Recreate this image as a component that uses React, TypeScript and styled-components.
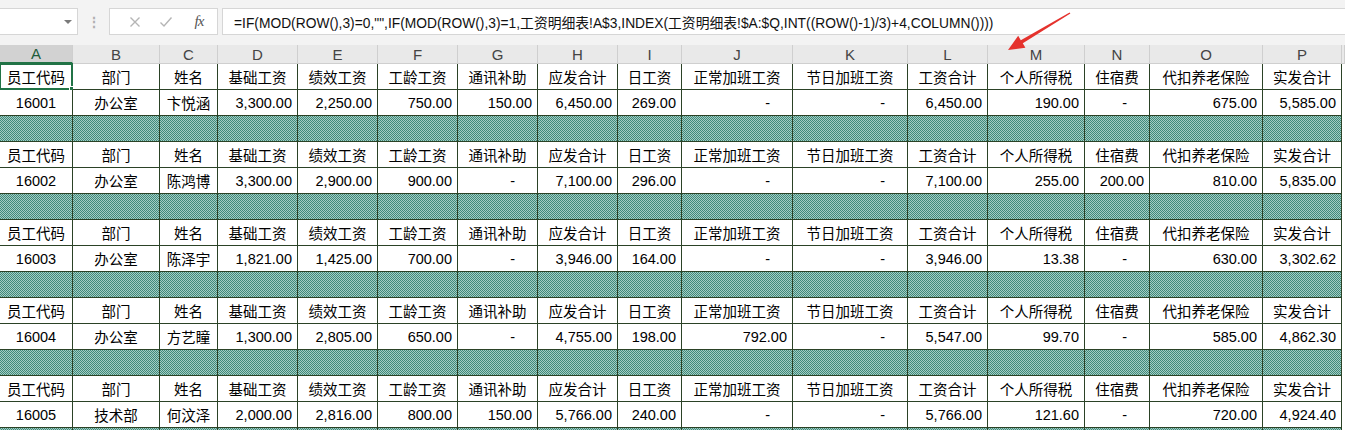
import React from "react";
import styled, { createGlobalStyle } from "styled-components";

const Global = createGlobalStyle`
  html, body { margin: 0; padding: 0; background: #fff; overflow: hidden; }
  body { width: 1345px; height: 430px; font-family: "Liberation Sans", "Noto Sans CJK SC", sans-serif; }
`;

const COLS = [73, 87, 58, 80, 80, 80, 80, 80, 64, 111, 115, 80, 97, 65, 113, 79];
const LEFTS = COLS.map((_, i) => COLS.slice(0, i).reduce((a, b) => a + b, 0));
const LETTERS = "ABCDEFGHIJKLMNOP".split("");
const TEMPLATE = COLS.map((w) => `${w}px`).join(" ") + " 1fr";
const SHEET_TOP = 64;
const ROW_H = 26;

const HEADERS = [
  "员工代码", "部门", "姓名", "基础工资", "绩效工资", "工龄工资", "通讯补助", "应发合计",
  "日工资", "正常加班工资", "节日加班工资", "工资合计", "个人所得税", "住宿费", "代扣养老保险", "实发合计",
];

const DATA: string[][] = [
  ["16001", "办公室", "卞悦涵", "3,300.00", "2,250.00", "750.00", "150.00", "6,450.00", "269.00", "-", "-", "6,450.00", "190.00", "-", "675.00", "5,585.00"],
  ["16002", "办公室", "陈鸿博", "3,300.00", "2,900.00", "900.00", "-", "7,100.00", "296.00", "-", "-", "7,100.00", "255.00", "200.00", "810.00", "5,835.00"],
  ["16003", "办公室", "陈泽宇", "1,821.00", "1,425.00", "700.00", "-", "3,946.00", "164.00", "-", "-", "3,946.00", "13.38", "-", "630.00", "3,302.62"],
  ["16004", "办公室", "方艺瞳", "1,300.00", "2,805.00", "650.00", "-", "4,755.00", "198.00", "792.00", "-", "5,547.00", "99.70", "-", "585.00", "4,862.30"],
  ["16005", "技术部", "何汶泽", "2,000.00", "2,816.00", "800.00", "150.00", "5,766.00", "240.00", "-", "-", "5,766.00", "121.60", "-", "720.00", "4,924.40"],
];

const FORMULA =
  '=IF(MOD(ROW(),3)=0,"",IF(MOD(ROW(),3)=1,工资明细表!A$3,INDEX(工资明细表!$A:$Q,INT((ROW()-1)/3)+4,COLUMN())))';

const Page = styled.div`
  position: relative;
  width: 1345px;
  height: 430px;
  overflow: hidden;
`;

const Defs = styled.svg`
  display: block;
  width: 0;
  height: 0;
`;

const FormulaBar = styled.div`
  display: flex;
  align-items: flex-start;
  height: 45px;
  background: #f3f3f3;
  box-sizing: border-box;
  padding-top: 8px;
`;

const NameBox = styled.div`
  width: 78px;
  height: 27px;
  background: #fff;
  border: 1px solid #d6d6d6;
  border-left: none;
  box-sizing: border-box;
  display: flex;
  align-items: center;
  justify-content: flex-end;
  padding-right: 5px;
`;

const DropArrow = styled.span`
  width: 0;
  height: 0;
  border-left: 4px solid transparent;
  border-right: 4px solid transparent;
  border-top: 4px solid #7a7a7a;
`;

const Dots = styled.div`
  width: 31px;
  height: 27px;
  display: flex;
  align-items: center;
  justify-content: center;
  color: #b0b0b0;
  font-size: 14px;
  font-weight: bold;
`;

const ActionBox = styled.div`
  width: 109px;
  height: 27px;
  background: #fff;
  border: 1px solid #d6d6d6;
  box-sizing: border-box;
  display: flex;
  align-items: center;
  padding-left: 12px;
`;

const ActionIcon = styled.span<{ $w: number }>`
  width: ${(p) => p.$w}px;
  display: flex;
  align-items: center;
  justify-content: center;
`;

const Fx = styled.span`
  font-family: "Liberation Serif", serif;
  font-style: italic;
  font-size: 15px;
  color: #555;
  letter-spacing: -1px;
`;

const FormulaInput = styled.div`
  flex: 1;
  margin-left: 4px;
  height: 27px;
  background: #fff;
  border: 1px solid #d6d6d6;
  border-right: none;
  box-sizing: border-box;
  display: flex;
  align-items: center;
  padding-left: 11px;
  font-size: 13.8px;
  color: #111;
  white-space: nowrap;
  font-family: "Liberation Sans", "Noto Sans CJK SC", sans-serif;
`;

const ColHeaderRow = styled.div`
  display: grid;
  grid-template-columns: ${TEMPLATE};
  height: 19px;
  background: #e9e9e9;
`;

const ColHeader = styled.div<{ $sel?: boolean }>`
  box-sizing: border-box;
  border-right: 1px solid #cfcfcf;
  border-bottom: ${(p) => (p.$sel ? "2px solid #217346" : "1px solid #cfcfcf")};
  background: ${(p) => (p.$sel ? "#d2d2d2" : "#e9e9e9")};
  color: ${(p) => (p.$sel ? "#1f5c3a" : "#444")};
  font-size: 15px;
  display: flex;
  align-items: center;
  justify-content: center;
  line-height: 1;
`;

const Sheet = styled.div`
  display: grid;
  grid-template-columns: ${TEMPLATE};
  grid-auto-rows: ${ROW_H}px;
`;

type Align = "center" | "right" | "dash";

const Cell = styled.div<{ $align: Align }>`
  position: relative;
  box-sizing: border-box;
  border-right: 1px solid #2b4226;
  border-bottom: 1px solid #2b4226;
  font-size: 14.5px;
  color: #000;
  background: #fff;
  display: flex;
  align-items: center;
  white-space: nowrap;
  justify-content: ${(p) => (p.$align === "center" ? "center" : "flex-end")};
  padding-right: ${(p) => (p.$align === "right" ? "5px" : p.$align === "dash" ? "22px" : "0")};
`;

const SepCell = styled.div`
  box-sizing: border-box;
  border-right: 1px solid #2b4226;
  border-bottom: 1px solid #2b4226;
  display: flex;
  overflow: hidden;
  background: #72ab9f;
`;

const SepFill = styled.svg`
  display: block;
  width: 100%;
  height: 100%;
  shape-rendering: crispEdges;
`;

const Blank = styled.div`
  background: #fff;
`;

const Selected = styled.div`
  position: absolute;
  left: -1px;
  top: -1px;
  right: -1px;
  bottom: -1px;
  border: 2px solid #217346;
  pointer-events: none;
`;

const Handle = styled.div`
  position: absolute;
  right: -4px;
  bottom: -4px;
  width: 6px;
  height: 6px;
  background: #217346;
  border: 1px solid #fff;
  box-sizing: border-box;
`;

const ArrowLayer = styled.svg`
  position: absolute;
  left: 0;
  top: 0;
  pointer-events: none;
`;

function alignFor(col: number, v: string, kind: "head" | "data"): Align {
  if (kind === "head") return "center";
  if (col <= 2) return "center";
  if (v === "-") return "dash";
  return "right";
}

type RowDef = { kind: "head" | "data" | "sep"; values?: string[]; first?: boolean };

const DARK = "#3f8a7b";
const LIGHT = "#a5ccc3";

export default function App() {
  const rows: RowDef[] = [];
  DATA.forEach((d, i) => {
    rows.push({ kind: "head", values: HEADERS, first: i === 0 });
    rows.push({ kind: "data", values: d });
    rows.push({ kind: "sep" });
  });

  return (
    <Page>
      <Global />
      <Defs aria-hidden="true">
        <defs>
          <pattern id="chk0" width="2" height="2" patternUnits="userSpaceOnUse">
            <rect width="2" height="2" fill={LIGHT} />
            <rect x="0" y="0" width="1" height="1" fill={DARK} />
            <rect x="1" y="1" width="1" height="1" fill={DARK} />
          </pattern>
          <pattern id="chk1" width="2" height="2" patternUnits="userSpaceOnUse">
            <rect width="2" height="2" fill={LIGHT} />
            <rect x="1" y="0" width="1" height="1" fill={DARK} />
            <rect x="0" y="1" width="1" height="1" fill={DARK} />
          </pattern>
        </defs>
      </Defs>
      <FormulaBar>
        <NameBox>
          <DropArrow />
        </NameBox>
        <Dots>⋮</Dots>
        <ActionBox>
          <ActionIcon $w={26}>
            <svg width="12" height="12" viewBox="0 0 12 12">
              <path d="M1.5 1.5 L10.5 10.5 M10.5 1.5 L1.5 10.5" stroke="#b5b5b5" strokeWidth="1.4" fill="none" />
            </svg>
          </ActionIcon>
          <ActionIcon $w={36}>
            <svg width="14" height="12" viewBox="0 0 14 12">
              <path d="M1.5 6.5 L5 10 L12.5 1.5" stroke="#b5b5b5" strokeWidth="1.4" fill="none" />
            </svg>
          </ActionIcon>
          <ActionIcon $w={30}>
            <Fx>fx</Fx>
          </ActionIcon>
        </ActionBox>
        <FormulaInput>{FORMULA}</FormulaInput>
      </FormulaBar>
      <ColHeaderRow>
        {LETTERS.map((l, i) => (
          <ColHeader key={l} $sel={i === 0}>
            {l}
          </ColHeader>
        ))}
        <ColHeader />
      </ColHeaderRow>
      <Sheet>
        {rows.map((r, ri) => (
          <React.Fragment key={ri}>
            {COLS.map((_, ci) => {
              if (r.kind === "sep") {
                const parity = (LEFTS[ci] + SHEET_TOP + ri * ROW_H) % 2;
                return (
                  <SepCell key={ci}>
                    <SepFill>
                      <rect width="100%" height="100%" fill={`url(#chk${parity})`} />
                    </SepFill>
                  </SepCell>
                );
              }
              const v = r.values ? r.values[ci] : "";
              return (
                <Cell key={ci} $align={alignFor(ci, v, r.kind)}>
                  {v}
                  {r.first && ci === 0 && (
                    <Selected>
                      <Handle />
                    </Selected>
                  )}
                </Cell>
              );
            })}
            <Blank />
          </React.Fragment>
        ))}
      </Sheet>
      <ArrowLayer width="1345" height="430" viewBox="0 0 1345 430">
        <polygon
          points="1008,50 1025.4,47.8 1022.8,43.3 1070.4,13.6 1069.6,12.4 1020.8,40.3 1018.2,35.8"
          fill="#e5322d"
        />
      </ArrowLayer>
    </Page>
  );
}
